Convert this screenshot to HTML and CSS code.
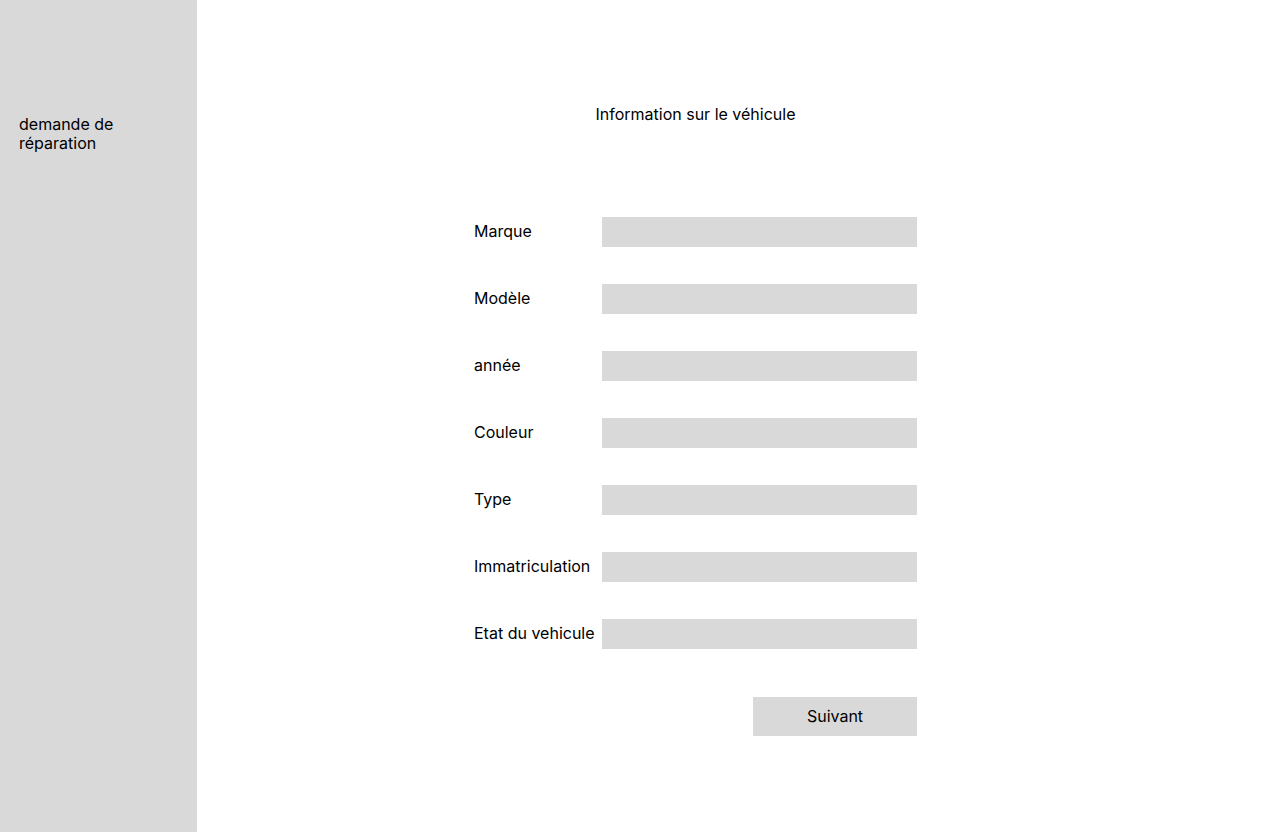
FILE: index.html
```html
<!DOCTYPE html>
<html lang="fr">
<head>
<meta charset="utf-8">
<title>Information sur le véhicule</title>
<link rel="stylesheet" href="styles.css">
</head>
<body>
<div class="layout">
  <aside class="sidebar">
    <p class="sidebar-link">demande de réparation</p>
  </aside>
  <main class="main">
    <div class="form-col">
      <h1 class="title">Information sur le véhicule</h1>
      <form class="form">
        <div class="row"><label class="label">Marque</label><div class="field"></div></div>
        <div class="row"><label class="label">Modèle</label><div class="field"></div></div>
        <div class="row"><label class="label">année</label><div class="field"></div></div>
        <div class="row"><label class="label">Couleur</label><div class="field"></div></div>
        <div class="row"><label class="label">Type</label><div class="field"></div></div>
        <div class="row"><label class="label">Immatriculation</label><div class="field"></div></div>
        <div class="row"><label class="label">Etat du vehicule</label><div class="field"></div></div>
        <div class="actions"><button type="button" class="btn">Suivant</button></div>
      </form>
    </div>
  </main>
</div>
</body>
</html>
```
FILE: styles.css
```css
* { box-sizing: border-box; }
html, body {
  margin: 0;
  padding: 0;
  background: #ffffff;
  font-family: "Inter", "Liberation Sans", sans-serif;
  font-size: 16px;
  line-height: 19px;
  color: #000000;
}
.layout {
  display: flex;
  width: 1280px;
  height: 832px;
}
.sidebar {
  width: 197px;
  flex: 0 0 197px;
  background: #d9d9d9;
  padding: 115px 0 0 19px;
}
.sidebar-link {
  margin: 0;
  max-width: 140px;
}
.main {
  flex: 1;
  padding: 105px 0 0 277px;
}
.form-col {
  width: 443px;
  display: flex;
  flex-direction: column;
}
.title {
  margin: 0;
  font-size: 16px;
  font-weight: 400;
  line-height: 19px;
  text-align: center;
}
.form {
  margin-top: 93px;
  display: flex;
  flex-direction: column;
  gap: 37px;
}
.row {
  display: flex;
  align-items: center;
  height: 30px;
}
.label {
  width: 128px;
  flex: 0 0 128px;
  white-space: nowrap;
  padding-bottom: 2px;
}
.field {
  width: 315px;
  height: 30px;
  background: #d9d9d9;
}
.actions {
  display: flex;
  justify-content: flex-end;
  margin-top: 11px;
}
.btn {
  width: 164px;
  height: 39px;
  border: none;
  background: #d9d9d9;
  font-family: inherit;
  font-size: 16px;
  line-height: 19px;
  color: #000;
  padding: 0;
}
```
